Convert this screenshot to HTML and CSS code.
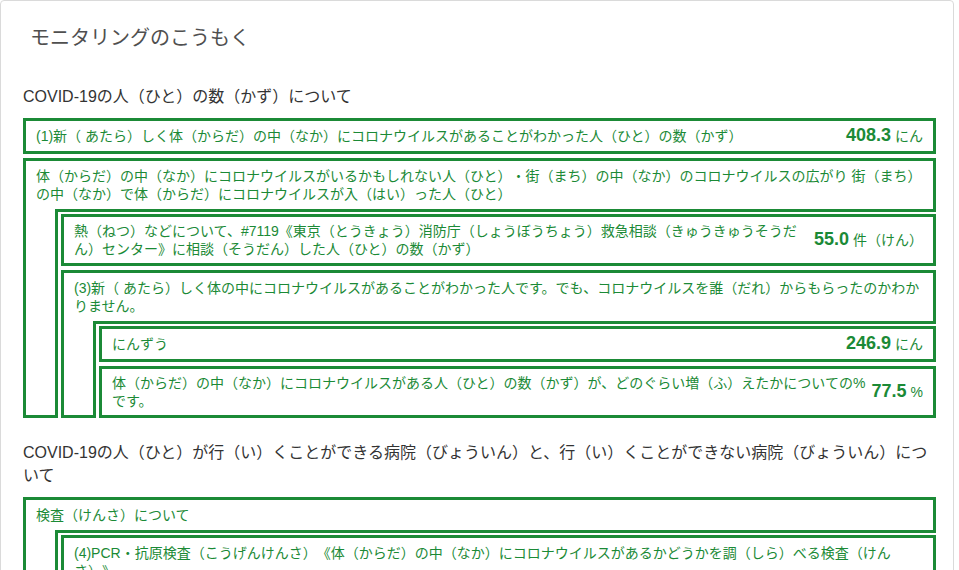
FILE: index.html
```html
<!DOCTYPE html>
<html lang="ja">
<head>
<meta charset="utf-8">
<title>モニタリングのこうもく</title>
<link rel="stylesheet" href="styles.css">
</head>
<body>
<div class="card">
  <h2 class="card-title">モニタリングのこうもく</h2>

  <section class="section">
    <h3 class="section-title">COVID-19の人（ひと）の数（かず）について</h3>
    <div class="list">
      <div class="item item-value">
        <span class="label">(1)新（ あたら）しく体（からだ）の中（なか）にコロナウイルスがあることがわかった人（ひと）の数（かず）</span>
        <span class="value"><b class="num">408.3</b><span class="unit">にん</span></span>
      </div>
      <div class="group">
        <div class="item">体（からだ）の中（なか）にコロナウイルスがいるかもしれない人（ひと）・街（まち）の中（なか）のコロナウイルスの広がり 街（まち）の中（なか）で体（からだ）にコロナウイルスが入（はい）った人（ひと）</div>
        <div class="children">
          <div class="spacer"></div>
          <div class="list">
            <div class="item item-value">
              <span class="label">熱（ねつ）などについて、#7119《東京（とうきょう）消防庁（しょうぼうちょう）救急相談（きゅうきゅうそうだん）センター》に相談（そうだん）した人（ひと）の数（かず）</span>
              <span class="value"><b class="num">55.0</b><span class="unit">件（けん）</span></span>
            </div>
            <div class="group">
              <div class="item">(3)新（ あたら）しく体の中にコロナウイルスがあることがわかった人です。でも、コロナウイルスを誰（だれ）からもらったのかわかりません。</div>
              <div class="children">
                <div class="spacer"></div>
                <div class="list">
                  <div class="item item-value">
                    <span class="label">にんずう</span>
                    <span class="value"><b class="num">246.9</b><span class="unit">にん</span></span>
                  </div>
                  <div class="item item-value">
                    <span class="label">体（からだ）の中（なか）にコロナウイルスがある人（ひと）の数（かず）が、どのぐらい増（ふ）えたかについての%です。</span>
                    <span class="value"><b class="num">77.5</b><span class="unit">%</span></span>
                  </div>
                </div>
              </div>
            </div>
          </div>
        </div>
      </div>
    </div>
  </section>

  <section class="section">
    <h3 class="section-title">COVID-19の人（ひと）が行（い）くことができる病院（びょういん）と、行（い）くことができない病院（びょういん）について</h3>
    <div class="list">
      <div class="group">
        <div class="item">検査（けんさ）について</div>
        <div class="children">
          <div class="spacer"></div>
          <div class="list">
            <div class="group">
              <div class="item">(4)PCR・抗原検査（こうげんけんさ）《体（からだ）の中（なか）にコロナウイルスがあるかどうかを調（しら）べる検査（けんさ）》</div>
              <div class="children">
                <div class="spacer"></div>
                <div class="list">
                  <div class="item item-value">
                    <span class="label">陽性率（ようせいりつ）</span>
                    <span class="value"><b class="num">3.2</b><span class="unit">%</span></span>
                  </div>
                </div>
              </div>
            </div>
          </div>
        </div>
      </div>
    </div>
  </section>
</div>
</body>
</html>
```

FILE: styles.css
```css
html, body {
  margin: 0;
  padding: 0;
  background: #ffffff;
  overflow: hidden;
}

body {
  font-family: "Liberation Sans", "Noto Sans CJK JP", sans-serif;
  text-spacing-trim: space-all;
  color: #333333;
}

.card {
  box-sizing: border-box;
  width: 954px;
  border: 1px solid #dadada;
  border-radius: 4px;
  background: #ffffff;
  padding: 22px 17px 40px 22px;
}

.card-title {
  margin: 0 0 32px;
  padding-left: 7px;
  font-size: 20px;
  line-height: 30px;
  font-weight: normal;
  color: #4f4f4f;
}

.section + .section {
  margin-top: 23px;
}

.section-title {
  margin: 0 0 10px;
  font-size: 16px;
  line-height: 23px;
  font-weight: normal;
  color: #333333;
}

.list {
  display: flex;
  flex-direction: column;
  gap: 4px;
}

.item {
  box-sizing: border-box;
  border: 3px solid #1b8a36;
  padding: 6px 10px;
  font-size: 14px;
  line-height: 18px;
  color: #1b8a36;
  background: #ffffff;
}

.item-value {
  display: flex;
  align-items: center;
  padding: 5px 10px;
}

.label {
  flex: 1 1 auto;
  min-width: 0;
}

.value {
  flex: 0 0 auto;
  height: 20px;
  margin-left: 4px;
  white-space: nowrap;
  line-height: 20px;
}

.num {
  font-size: 18px;
  line-height: 1;
  font-weight: bold;
}

.unit {
  margin-left: 4px;
  font-size: 14px;
  line-height: 1;
}

.children {
  display: flex;
  gap: 3px;
  margin-top: -3px;
}

.spacer {
  position: relative;
  flex: 0 0 35px;
  box-sizing: border-box;
  border: 3px solid #1b8a36;
  border-top: 0;
  background: #ffffff;
}

.children > .list {
  flex: 1 1 auto;
  min-width: 0;
  padding-top: 5px;
}
```
